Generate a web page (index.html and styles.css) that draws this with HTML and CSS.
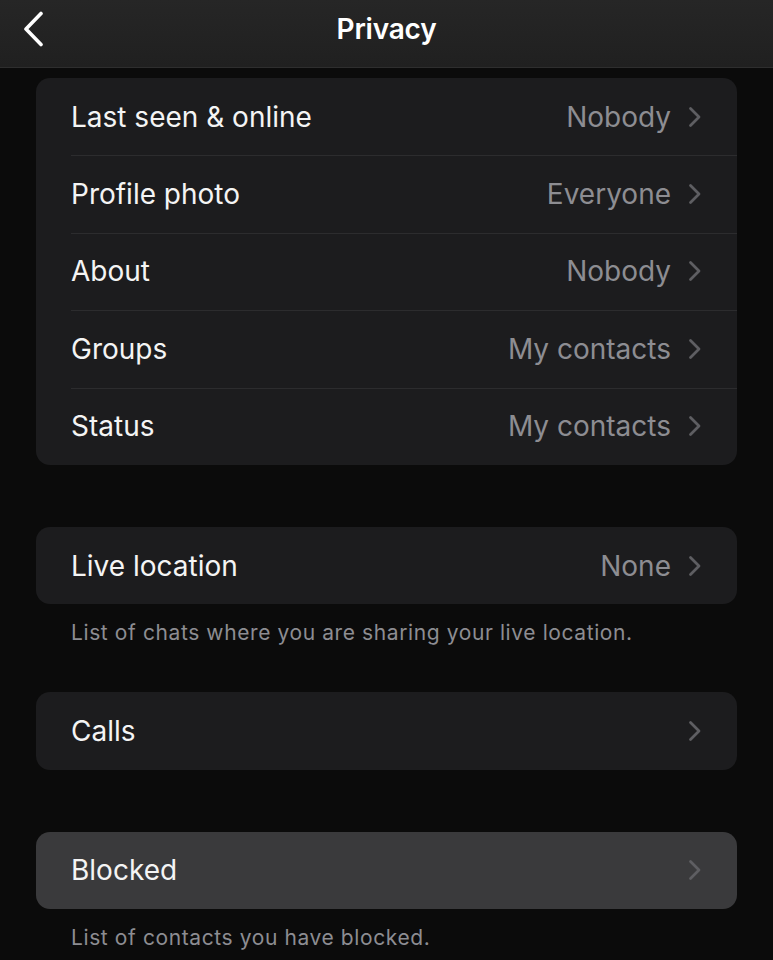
FILE: index.html
```html
<!DOCTYPE html>
<html>
<head>
<meta charset="utf-8">
<link rel="stylesheet" href="styles.css">
</head>
<body>
<header class="nav">
  <svg class="back" viewBox="0 0 22 36" width="22" height="36"><path d="M19 2.5 L4 18 L19 33.5" fill="none" stroke="#fff" stroke-width="3.6" stroke-linecap="round" stroke-linejoin="round"/></svg>
  <h1 class="title">Privacy</h1>
</header>
<main class="content">
  <section class="group first">
    <div class="card">
      <div class="row"><span class="label">Last seen &amp; online</span><span class="value">Nobody</span><svg class="chev" viewBox="0 0 14 22" width="14" height="22"><path d="M2.5 2.5 L11 11 L2.5 19.5" fill="none" stroke="#5e5e62" stroke-width="2.8" stroke-linecap="round" stroke-linejoin="round"/></svg></div>
      <div class="row"><span class="label">Profile photo</span><span class="value">Everyone</span><svg class="chev" viewBox="0 0 14 22" width="14" height="22"><path d="M2.5 2.5 L11 11 L2.5 19.5" fill="none" stroke="#5e5e62" stroke-width="2.8" stroke-linecap="round" stroke-linejoin="round"/></svg></div>
      <div class="row"><span class="label">About</span><span class="value">Nobody</span><svg class="chev" viewBox="0 0 14 22" width="14" height="22"><path d="M2.5 2.5 L11 11 L2.5 19.5" fill="none" stroke="#5e5e62" stroke-width="2.8" stroke-linecap="round" stroke-linejoin="round"/></svg></div>
      <div class="row"><span class="label">Groups</span><span class="value">My contacts</span><svg class="chev" viewBox="0 0 14 22" width="14" height="22"><path d="M2.5 2.5 L11 11 L2.5 19.5" fill="none" stroke="#5e5e62" stroke-width="2.8" stroke-linecap="round" stroke-linejoin="round"/></svg></div>
      <div class="row"><span class="label">Status</span><span class="value">My contacts</span><svg class="chev" viewBox="0 0 14 22" width="14" height="22"><path d="M2.5 2.5 L11 11 L2.5 19.5" fill="none" stroke="#5e5e62" stroke-width="2.8" stroke-linecap="round" stroke-linejoin="round"/></svg></div>
    </div>
  </section>
  <section class="group">
    <div class="card">
      <div class="row"><span class="label">Live location</span><span class="value">None</span><svg class="chev" viewBox="0 0 14 22" width="14" height="22"><path d="M2.5 2.5 L11 11 L2.5 19.5" fill="none" stroke="#5e5e62" stroke-width="2.8" stroke-linecap="round" stroke-linejoin="round"/></svg></div>
    </div>
    <p class="note">List of chats where you are sharing your live location.</p>
  </section>
  <section class="group">
    <div class="card">
      <div class="row"><span class="label">Calls</span><span class="value"></span><svg class="chev" viewBox="0 0 14 22" width="14" height="22"><path d="M2.5 2.5 L11 11 L2.5 19.5" fill="none" stroke="#5e5e62" stroke-width="2.8" stroke-linecap="round" stroke-linejoin="round"/></svg></div>
    </div>
  </section>
  <section class="group">
    <div class="card active">
      <div class="row"><span class="label">Blocked</span><span class="value"></span><svg class="chev" viewBox="0 0 14 22" width="14" height="22"><path d="M2.5 2.5 L11 11 L2.5 19.5" fill="none" stroke="#5e5e62" stroke-width="2.8" stroke-linecap="round" stroke-linejoin="round"/></svg></div>
    </div>
    <p class="note">List of contacts you have blocked.</p>
  </section>
</main>
</body>
</html>
```
FILE: styles.css
```css
* { box-sizing: border-box; }
html, body { margin: 0; padding: 0; }
body {
  background: #0b0b0b;
  font-family: "Inter", "Roboto", "Liberation Sans", sans-serif;
  color: #fff;
  width: 773px;
  height: 960px;
  overflow: hidden;
}
.nav {
  height: 68px;
  background: linear-gradient(#262626, #202020);
  border-bottom: 1px solid #2e2e2e;
  display: flex;
  align-items: center;
  justify-content: center;
  position: relative;
}
.back {
  position: absolute;
  left: 22px;
  top: 11px;
}
.title {
  margin: 0;
  font-size: 28px;
  font-weight: 600;
  letter-spacing: -0.2px;
  color: #fff;
  padding-bottom: 10px;
}
.content {
  padding: 10px 36px 0 36px;
}
.group { margin-bottom: 62px; }
.group:has(.note) { margin-bottom: 47px; }
.card {
  background: #1c1c1e;
  border-radius: 14px;
  overflow: hidden;
}
.card.active { background: #3a3a3c; }
.row {
  height: 77.4px;
  display: flex;
  align-items: center;
  padding-left: 35px;
  padding-right: 35px;
  position: relative;
}
.row + .row::before {
  content: "";
  position: absolute;
  left: 35px;
  right: 0;
  top: 0;
  height: 1px;
  background: #2c2c2e;
}
.label {
  flex: 1;
  font-size: 28px;
  letter-spacing: 0;
  color: #f4f4f4;
}
.value {
  font-size: 28px;
  letter-spacing: 0;
  color: #8d8d92;
  margin-right: 17px;
}
.chev { display: block; }
.note {
  margin: 0;
  padding: 16px 35px 0 35px;
  font-size: 21px;
  letter-spacing: 0.6px;
  color: #8d8d92;
}
```
